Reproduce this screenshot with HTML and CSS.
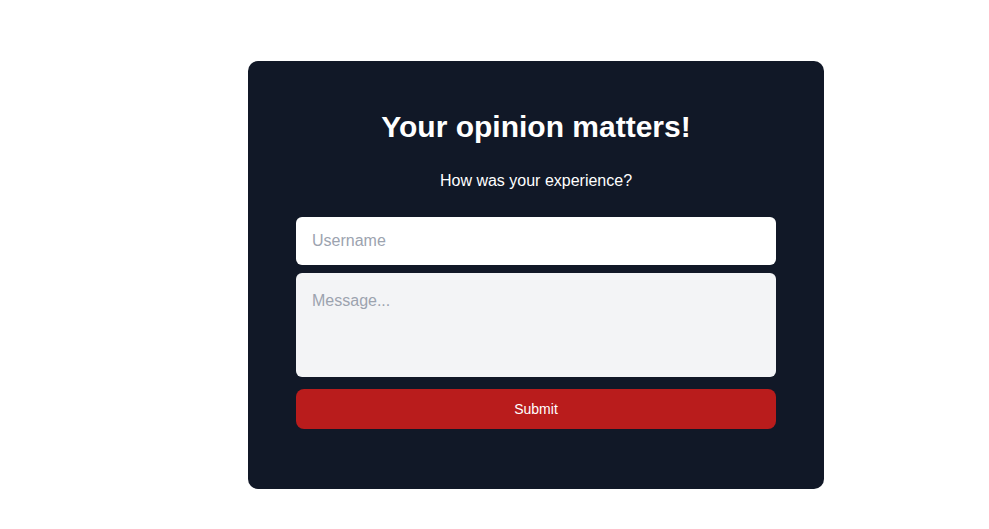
FILE: index.html
```html
<!DOCTYPE html>
<html lang="en">
<head>
<meta charset="utf-8">
<title>Feedback</title>
<link rel="stylesheet" href="styles.css">
</head>
<body>
<main class="page">
  <section class="card">
    <h1 class="title">Your opinion matters!</h1>
    <p class="subtitle">How was your experience?</p>
    <form class="form">
      <input class="field" type="text" placeholder="Username">
      <textarea class="field area" placeholder="Message..."></textarea>
      <button class="submit" type="button">Submit</button>
    </form>
  </section>
</main>
</body>
</html>
```
FILE: styles.css
```css
* { box-sizing: border-box; }
html, body { margin: 0; padding: 0; background: #ffffff; }
body { font-family: "Liberation Sans", Arial, sans-serif; }
.page { padding: 61px 0 0 248px; }
.card {
  width: 576px;
  background: #111827;
  border-radius: 10px;
  padding: 48px 48px 60px;
  color: #ffffff;
}
.title {
  margin: 0 0 24px;
  font-size: 30px;
  line-height: 36px;
  font-weight: 700;
  text-align: center;
}
.subtitle {
  margin: 0 0 24px;
  font-size: 16px;
  line-height: 24px;
  text-align: center;
}
.form { display: flex; flex-direction: column; }
.field {
  display: block;
  width: 100%;
  height: 48px;
  border: none;
  border-radius: 6px;
  background: #ffffff;
  padding: 12px 16px;
  font-family: inherit;
  font-size: 16px;
  line-height: 24px;
  color: #111827;
  outline: none;
}
.field::placeholder { color: #9ca3af; }
.area {
  margin-top: 8px;
  height: 104px;
  padding: 16px 16px;
  background: #f3f4f6;
  resize: none;
}
.submit {
  margin-top: 12px;
  height: 40px;
  border: none;
  border-radius: 8px;
  background: #b91c1c;
  color: #ffffff;
  font-family: inherit;
  font-size: 14px;
}
```
